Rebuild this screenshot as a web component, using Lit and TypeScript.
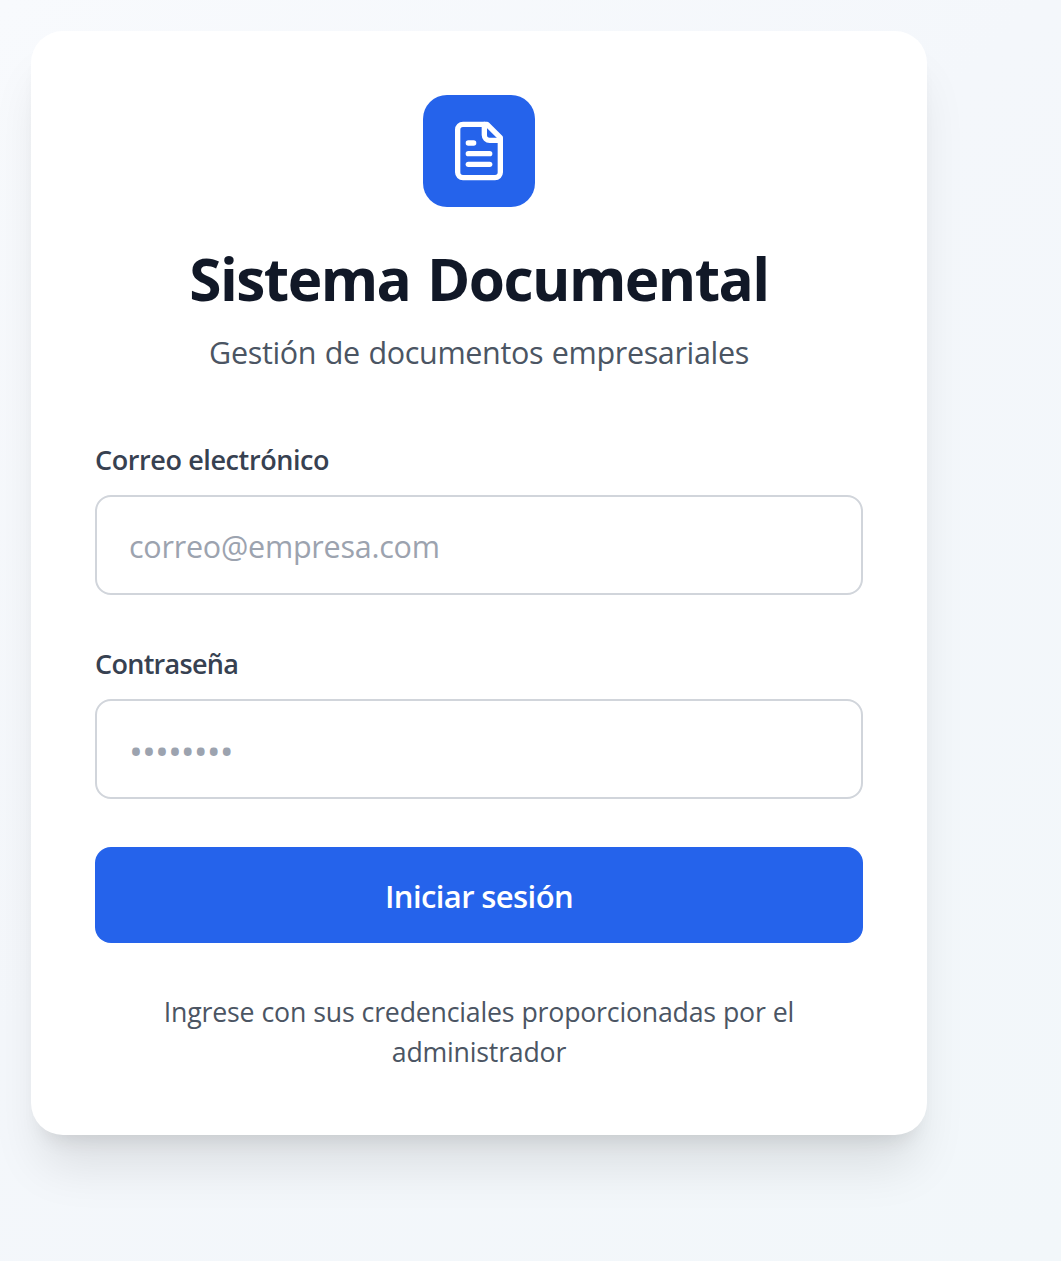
import { LitElement, html, css } from "lit";
import { customElement } from "lit/decorators.js";

@customElement("app-root")
export class AppRoot extends LitElement {
  static styles = css`
    :host {
      display: block;
      box-sizing: border-box;
      height: 1261px;
      padding: 31px;
      overflow: hidden;
      background: linear-gradient(135deg, #f8fafd 0%, #f4f7fb 45%, #f2f7fa 100%);
      font-family: "Open Sans", "Noto Sans", sans-serif;
      color: #111827;
    }
    * { box-sizing: border-box; margin: 0; }
    .card {
      width: 896px;
      height: 1104px;
      padding: 64px;
      border-radius: 32px;
      background: #fff;
      box-shadow: 0 40px 50px -10px rgba(0, 0, 0, 0.1), 0 16px 20px -12px rgba(0, 0, 0, 0.1);
      display: flex;
      flex-direction: column;
      text-align: center;
    }
    .card > * { flex-shrink: 0; }
    .logo {
      width: 112px;
      height: 112px;
      border-radius: 24px;
      background: #2563eb;
      display: grid;
      place-items: center;
      align-self: center;
    }
    .logo svg { width: 64px; height: 64px; display: block; }
    h1, .sub, .hint, .label, button { white-space: nowrap; }
    h1 { margin-top: 31px; font-size: 58.5px; font-weight: 700; line-height: 80px; letter-spacing: -1.4px; word-spacing: 3px; }
    h1 { letter-spacing: -1.55px; }
    .sub { font-size: 30.5px; line-height: 48px; letter-spacing: -0.34px; word-spacing: 1px; color: #4b5563; margin-top: 10px; }
    form { display: flex; flex-direction: column; margin-top: 64px; text-align: left; }
    .label { font-size: 27px; font-weight: 600; line-height: 40px; letter-spacing: -0.4px; color: #374151; margin-bottom: 15px; }
    .label.short { letter-spacing: -0.7px; }
    input {
      height: 100px;
      width: 100%;
      padding: 2px 32px 0;
      border: 2px solid #d1d5db;
      border-radius: 16px;
      font-family: inherit;
      font-size: 30.5px;
      letter-spacing: -0.24px;
      background: #fff;
      margin-bottom: 49px;
    }
    .password { margin-bottom: 48px; padding: 2px 32px 0; font-size: 37px; letter-spacing: -0.95px; }
    input::placeholder { color: #9ca3af; opacity: 1; }
    button {
      height: 96px;
      padding: 1px 0 0;
      border: 0;
      border-radius: 16px;
      background: #2563eb;
      color: #fff;
      font-family: inherit;
      font-size: 31px;
      font-weight: 600;
      letter-spacing: -0.6px;
    }
    .hint { margin-top: 49px; font-size: 26.7px; line-height: 40px; letter-spacing: -0.2px; word-spacing: 0.4px; color: #4b5563; }
  `;

  render() {
    return html`
      <main class="card">
        <div class="logo">
          <svg viewBox="0 0 24 24" fill="none" stroke="#fff" stroke-width="2" stroke-linecap="round" stroke-linejoin="round">
            <path d="M15 2H6a2 2 0 0 0-2 2v16a2 2 0 0 0 2 2h12a2 2 0 0 0 2-2V7Z" />
            <path d="M14 2v4a2 2 0 0 0 2 2h4" />
            <path d="M10 9H8" /><path d="M16 13H8" /><path d="M16 17H8" />
          </svg>
        </div>
        <h1>Sistema Documental</h1>
        <p class="sub">Gestión de documentos empresariales</p>
        <form>
          <label class="label" for="email">Correo electrónico</label>
          <input id="email" type="email" placeholder="correo@empresa.com" />
          <label class="label short" for="password">Contraseña</label>
          <input class="password" id="password" type="password" placeholder="••••••••" />
          <button type="button">Iniciar sesión</button>
        </form>
        <p class="hint">Ingrese con sus credenciales proporcionadas por el<br />administrador</p>
      </main>
    `;
  }
}
